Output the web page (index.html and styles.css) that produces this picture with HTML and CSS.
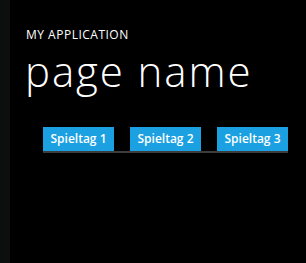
FILE: index.html
```html
<!DOCTYPE html>
<html lang="de">
<head>
    <meta charset="UTF-8">
    <meta name="viewport" content="width=device-width, initial-scale=1.0">
    <title>page name</title>
    <link rel="stylesheet" href="styles.css">
</head>
<body>
    <div class="edge"></div>

    <div class="page">
        <div class="app-title">MY APPLICATION</div>
        <h1 class="page-title">page name</h1>

        <div class="tabs">
            <div class="tab">Spieltag 1</div>
            <div class="tab">Spieltag 2</div>
            <div class="tab">Spieltag 3</div>
        </div>
    </div>
</body>
</html>
```

FILE: styles.css
```css
html, body {
    height: 100%;
}

body {
    margin: 0;
    display: flex;
    background-color: #000000;
    color: #ffffff;
    font-family: 'Open Sans', 'Noto Sans', sans-serif;
}

.edge {
    width: 10px;
    flex-shrink: 0;
    background-color: #0d0f0f;
}

.page {
    flex: 1;
    padding: 28px 0 0 16px;
}

.app-title {
    font-size: 12px;
    line-height: 14px;
    letter-spacing: 0.5px;
}

.page-title {
    margin: 4px 0 0 -1px;
    font-size: 42px;
    font-weight: 300;
    line-height: 50px;
    letter-spacing: 1.9px;
}

.tabs {
    display: flex;
    gap: 16px;
    width: 245px;
    margin: 31px 0 0 17px;
    border-bottom: 2px solid #3c3c3c;
}

.tab {
    width: 71px;
    height: 24px;
    line-height: 24px;
    text-align: center;
    background-color: #1ba1e2;
    font-size: 12px;
    font-weight: 600;
}
```
